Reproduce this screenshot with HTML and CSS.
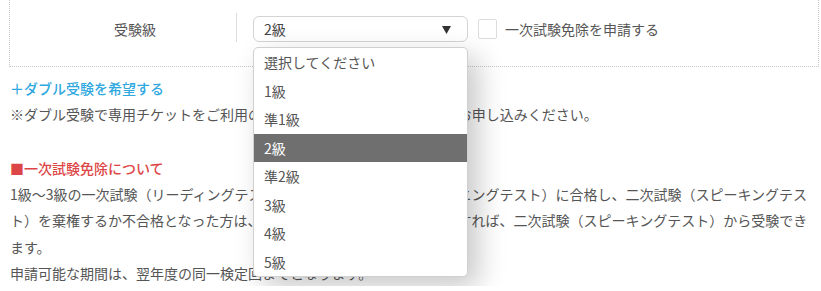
FILE: index.html
```html
<!DOCTYPE html>
<html lang="ja">
<head>
<meta charset="utf-8">
<link rel="stylesheet" href="styles.css">
</head>
<body>
<div class="form-row">
  <div class="label">受験級</div>
  <div class="sep"></div>
  <div class="select-wrap">
    <div class="select">
      <span class="value">2級</span>
      <svg class="arrow" width="9" height="8" viewBox="0 0 9 8"><path d="M0 0H9L4.5 8Z" fill="#333"/></svg>
    </div>
    <ul class="dropdown">
      <li>選択してください</li>
      <li>1級</li>
      <li>準1級</li>
      <li class="active">2級</li>
      <li>準2級</li>
      <li>3級</li>
      <li>4級</li>
      <li>5級</li>
    </ul>
  </div>
  <span class="checkbox"></span>
  <span class="check-label">一次試験免除を申請する</span>
</div>
<div class="content">
  <p class="link">＋ダブル受験を希望する</p>
  <p>※ダブル受験で専用チケットをご利用の場合は、受験級ごとにそれぞれお申し込みください。</p>
  <p class="heading">■一次試験免除について</p>
  <p class="para">1級～3級の一次試験（リーディングテスト・ライティングテスト・リスニングテスト）に合格し、二次試験（スピーキングテスト）を棄権するか不合格となった方は、翌年度の同一検定回までに申請すれば、二次試験（スピーキングテスト）から受験できます。<br>申請可能な期間は、翌年度の同一検定回までとなります。</p>
</div>
</body>
</html>
```
FILE: styles.css
```css
* { box-sizing: border-box; }
body {
  margin: 0;
  background: #fff;
  font-family: "Noto Sans CJK JP", "Noto Sans", sans-serif;
  font-size: 14px;
  color: #555;
}
.form-row {
  margin-left: 9px;
  width: 810px;
  height: 67px;
  border: 1px dotted #c8c8c8;
  border-top: none;
  display: flex;
  align-items: center;
  padding-top: 16px;
  padding-bottom: 24px;
}
.label {
  width: 226px;
  padding-left: 24px;
  text-align: center;
  line-height: 26px;
}
.sep {
  width: 1px;
  height: 29px;
  background: #ddd;
  margin-top: -3px;
  margin-right: 16px;
}
.select-wrap {
  position: relative;
  width: 215px;
  height: 26px;
}
.select {
  height: 26px;
  border: 1px solid #d4d4d4;
  border-radius: 6px;
  display: flex;
  align-items: center;
  justify-content: space-between;
  padding: 0 16px 0 10px;
  color: #444;
}
.arrow { display: block; margin-top: 1px; }
.dropdown {
  position: absolute;
  z-index: 10;
  top: 31px;
  left: 0;
  width: 215px;
  margin: 0;
  padding: 0;
  list-style: none;
  background: #fff;
  border: 1px solid #d0d0d0;
  border-radius: 5px;
  box-shadow: 10px 10px 28px rgba(0, 0, 0, 0.22);
  overflow: hidden;
}
.dropdown li {
  height: 28.5px;
  line-height: 28.5px;
  padding-left: 10px;
  color: #555;
}
.dropdown li.active {
  background: #6f6f6f;
  color: #fff;
}
.checkbox {
  width: 19px;
  height: 20px;
  border: 1px solid #dcdcdc;
  border-radius: 2px;
  margin-left: 10px;
}
.check-label {
  margin-left: 8px;
  line-height: 26px;
}
.content {
  margin-top: 8px;
  padding-left: 10px;
  width: 812px;
}
.content p {
  margin: 0;
  line-height: 26px;
}
.content .link {
  color: #2fa8e0;
  font-weight: 500;
}
.content .heading {
  margin-top: 28px;
  color: #dd4646;
  font-weight: 500;
}
.content .para {
  margin-top: 0;
  line-height: 26.3px;
}
```
